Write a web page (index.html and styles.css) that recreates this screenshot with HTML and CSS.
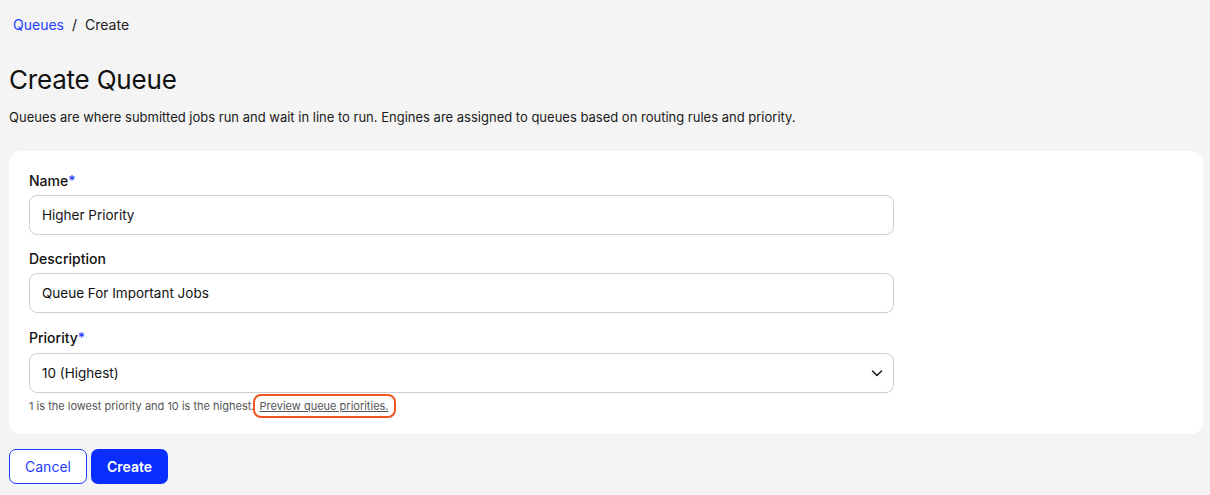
FILE: index.html
```html
<!DOCTYPE html>
<html lang="en">
<head>
    <meta charset="UTF-8">
    <meta name="viewport" content="width=device-width, initial-scale=1.0">
    <title>Create Queue</title>
    <link rel="stylesheet" href="styles.css">
</head>
<body>
    <nav class="breadcrumb">
        <a href="#" class="crumb-link">Queues</a>
        <span class="crumb-sep">/</span>
        <span class="crumb-current">Create</span>
    </nav>

    <h1>Create Queue</h1>
    <p class="intro">Queues are where submitted jobs run and wait in line to run. Engines are assigned to queues based on routing rules and priority.</p>

    <form class="card" id="queueForm">
        <div class="form-group">
            <label for="name">Name<span class="req">*</span></label>
            <input type="text" id="name" name="name" value="Higher Priority">
        </div>

        <div class="form-group">
            <label for="description">Description</label>
            <input type="text" id="description" name="description" value="Queue For Important Jobs">
        </div>

        <div class="form-group form-group-select">
            <label for="priority">Priority<span class="req">*</span></label>
            <div class="select-wrap">
                <select id="priority" name="priority">
                    <option>10 (Highest)</option>
                </select>
                <svg class="chevron" width="14" height="14" viewBox="0 0 14 14" fill="none">
                    <path d="M2.5 5l4.5 4.5L11.5 5" stroke="#1a1a1a" stroke-width="1.5" stroke-linecap="round" stroke-linejoin="round"/>
                </svg>
            </div>
            <p class="hint">1 is the lowest priority and 10 is the highest. <a href="#" class="hint-link">Preview queue priorities.</a></p>
        </div>
    </form>

    <div class="actions">
        <button type="button" class="btn btn-outline">Cancel</button>
        <button type="submit" form="queueForm" class="btn btn-primary">Create</button>
    </div>
</body>
</html>
```

FILE: styles.css
```css
* {
    margin: 0;
    padding: 0;
    box-sizing: border-box;
}

body {
    font-family: 'Inter', 'Liberation Sans', sans-serif;
    background: #f4f4f4;
    color: #111;
    padding: 15px 7px 10px 9px;
    font-size: 14px;
}

.breadcrumb {
    display: flex;
    align-items: center;
    gap: 8px;
    padding-left: 4px;
    line-height: 20px;
    font-size: 14px;
}

.crumb-link {
    color: #1f3dff;
    text-decoration: none;
}

.crumb-current {
    color: #222;
}

h1 {
    font-size: 26px;
    font-weight: 400;
    line-height: 32px;
    margin-top: 29px;
    letter-spacing: -0.2px;
}

.intro {
    margin-top: 11px;
    line-height: 20px;
    font-size: 13px;
    color: #1a1a1a;
}

.card {
    background: white;
    border-radius: 12px;
    margin-top: 24px;
    padding: 20px 20px 20px 20px;
}

.form-group + .form-group {
    margin-top: 14px;
}

.form-group + .form-group-select {
    margin-top: 15px;
}

label {
    display: block;
    font-size: 14px;
    line-height: 20px;
    margin-bottom: 4px;
    color: #111;
    font-weight: 500;
}

.form-group-select label {
    margin-bottom: 5px;
}

.req {
    color: #1f3dff;
}

input[type="text"], select {
    width: 865px;
    height: 40px;
    padding: 0 12px;
    border: 1px solid #cfcfcf;
    border-radius: 8px;
    font-family: inherit;
    font-size: 13.5px;
    color: #111;
    background: white;
}

select {
    appearance: none;
    -webkit-appearance: none;
}

.select-wrap {
    position: relative;
    width: 865px;
}

.chevron {
    position: absolute;
    right: 10px;
    top: 13px;
    pointer-events: none;
}

.hint {
    margin-top: 5px;
    font-size: 11px;
    line-height: 16px;
    color: #555;
}

/* focused link keeps its orange ring */
.hint-link {
    color: #555;
    text-decoration: underline;
    padding: 0 2px;
    outline: 2px solid #f0561d;
    outline-offset: 3px;
    border-radius: 3px;
}

.actions {
    display: flex;
    gap: 4px;
    margin-top: 15px;
}

.btn {
    height: 35px;
    border-radius: 7px;
    font-family: inherit;
    font-size: 14px;
    cursor: pointer;
}

.btn-outline {
    width: 78px;
    background: white;
    color: #1f3dff;
    border: 1px solid #1f3dff;
}

.btn-primary {
    width: 77px;
    background: #0a2eff;
    color: white;
    border: none;
    font-weight: 600;
}
```
